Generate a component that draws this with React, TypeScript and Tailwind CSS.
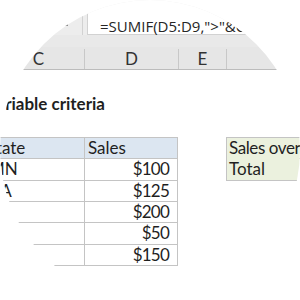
const sheetFont = { fontFamily: 'Lato, "Open Sans", sans-serif' }

const sales = [
  { state: 'MN', amount: '$100' },
  { state: 'CA', amount: '$125' },
  { state: 'TX', amount: '$200' },
  { state: 'NY', amount: '$50' },
  { state: 'FL', amount: '$150' },
]

function Row({ children, className = '' }: { children?: React.ReactNode; className?: string }) {
  return <div className={`flex h-[22.33px] -ml-[7px] ${className}`}>{children}</div>
}

export default function App() {
  return (
    <div className="w-[300px] h-[300px] rounded-full overflow-hidden bg-white text-[#1f1f1f]" style={sheetFont}>
      {/* formula bar */}
      <div className="flex h-[35px] bg-[#ededed]">
        <div className="w-[83px] shrink-0 border-r border-[#d2d2d2] flex items-end justify-end pr-[14px] pb-[9px]">
          <span className="block w-[3px] h-[2px] bg-[#8a8a8a]" />
        </div>
        <div
          className="ml-[4px] flex-1 min-w-0 bg-white border-l border-b border-[#d2d2d2] pl-[12px] flex items-center pt-[19px] text-[15px] whitespace-nowrap text-[#262626]"
          style={{ fontFamily: '"Open Sans", sans-serif' }}
        >
          =SUMIF(D5:D9,"&gt;"&amp;C5)
        </div>
      </div>
      <div className="h-[12px] bg-[#e9e9e9]" />

      {/* column headers */}
      <div className="flex h-[23px] -ml-[7px] bg-[#e6e6e6] border-b border-[#bcbcbc] text-[17px] text-[#333] pt-[2px]">
        <div className="w-[92px] shrink-0 border-r border-[#c8c8c8] flex items-center justify-center">C</div>
        <div className="w-[94px] shrink-0 border-r border-[#c8c8c8] flex items-center justify-center">D</div>
        <div className="w-[48px] shrink-0 border-r border-[#c8c8c8] flex items-center justify-center">E</div>
        <div className="flex-1" />
      </div>

      {/* sheet */}
      <Row />
      <div className="flex h-[22.33px] items-center -ml-[14px] font-bold text-[17px] whitespace-nowrap">Variable criteria</div>
      <Row />

      <Row className="text-[17px]">
        <div className="w-[92px] shrink-0 bg-[#dce6f1] border-y border-[#c4c4c4] flex items-center -mr-px overflow-hidden">
          <span className="-ml-[6px]">State</span>
        </div>
        <div className="w-[94px] shrink-0 bg-[#dce6f1] border border-[#c4c4c4] flex items-center pl-[3px]">Sales</div>
        <div className="w-[48px] shrink-0" />
        <div className="flex-1 min-w-0 bg-[#ebf1de] border-y border-l border-[#c4c4c4] flex items-center pl-[2px] whitespace-nowrap tracking-[-0.4px]">
          Sales over
        </div>
      </Row>
      {sales.map((s, i) => (
        <Row key={s.state} className="text-[17px] -mt-px">
          <div className="w-[92px] shrink-0 border-b border-[#c4c4c4] flex items-center -mr-px overflow-hidden">
            <span className="-ml-[4px]">{s.state}</span>
          </div>
          <div className="w-[94px] shrink-0 border-x border-b border-[#c4c4c4] flex items-center justify-end pr-[8px] tracking-[-0.8px]">
            {s.amount}
          </div>
          <div className="w-[48px] shrink-0" />
          {i === 0 ? (
            <div className="flex-1 min-w-0 bg-[#ebf1de] border-b border-l border-[#c4c4c4] flex items-center pl-[2px]">
              Total
            </div>
          ) : (
            <div className="flex-1" />
          )}
        </Row>
      ))}
    </div>
  )
}
